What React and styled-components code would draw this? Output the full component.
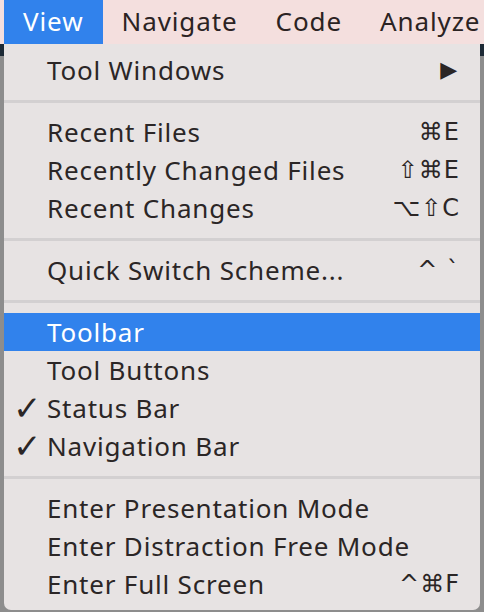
import React from "react";
import styled, { createGlobalStyle } from "styled-components";

const Global = createGlobalStyle`
  html, body { margin: 0; padding: 0; }
  body {
    background: #8d8d8d;
    font-family: "Noto Sans", "Open Sans", sans-serif;
    -webkit-font-smoothing: antialiased;
  }
`;

const Screen = styled.div`
  width: 484px;
  height: 612px;
  overflow: hidden;
  display: flex;
  flex-direction: column;
  background: linear-gradient(to bottom, #1d2a36 0px, #1d2a36 56px, #8d8d8d 56px);
`;

const MenuBar = styled.div`
  height: 44px;
  display: flex;
  align-items: stretch;
  padding-left: 4px;
  background: #f4dfde;
  flex: none;
`;

const MenuTitle = styled.div`
  display: flex;
  align-items: center;
  padding: 0 19px 2px;
  font-size: 26px;
  letter-spacing: 0.9px;
  color: ${(p) => (p.$active ? "#ffffff" : "#2b2323")};
  background: ${(p) => (p.$active ? "#3182ec" : "transparent")};
  white-space: nowrap;
`;

const Dropdown = styled.div`
  margin: 0 4px;
  padding: 7px 0 7px;
  background: #e7e3e3;
  border-radius: 0 0 7px 7px;
  display: flex;
  flex-direction: column;
`;

const Item = styled.div`
  height: 38px;
  display: grid;
  grid-template-columns: 43px 1fr auto;
  align-items: center;
  padding-right: 20px;
  padding-bottom: 1px;
  box-sizing: border-box;
  font-size: 26px;
  letter-spacing: 0.8px;
  color: ${(p) => (p.$selected ? "#ffffff" : "#2b2626")};
  background: ${(p) => (p.$selected ? "#3182ec" : "transparent")};
  white-space: nowrap;
`;

const Check = styled.span`
  font-family: "DejaVu Sans", sans-serif;
  font-size: 34px;
  padding-left: 9px;
  line-height: 1;
  font-weight: bold;
`;

const Label = styled.span`
  line-height: 1;
`;

const Shortcut = styled.span`
  font-family: "DejaVu Sans", "Liberation Sans", sans-serif;
  font-size: 24px;
  letter-spacing: 1px;
  text-align: right;
  line-height: 1;
`;

const Arrow = styled.span`
  font-family: "DejaVu Sans", sans-serif;
  font-size: 22px;
  padding-right: 2px;
`;

const Separator = styled.div`
  height: 24px;
  display: flex;
  align-items: center;
  &::after {
    content: "";
    display: block;
    width: 100%;
    height: 3px;
    background: #d3d0d1;
  }
`;

const groups = [
  [{ label: "Tool Windows", submenu: true }],
  [
    { label: "Recent Files", shortcut: "⌘E" },
    { label: "Recently Changed Files", shortcut: "⇧⌘E" },
    { label: "Recent Changes", shortcut: "⌥⇧C" },
  ],
  [{ label: "Quick Switch Scheme...", shortcut: "^ `" }],
  [
    { label: "Toolbar", selected: true },
    { label: "Tool Buttons" },
    { label: "Status Bar", checked: true },
    { label: "Navigation Bar", checked: true },
  ],
  [
    { label: "Enter Presentation Mode" },
    { label: "Enter Distraction Free Mode" },
    { label: "Enter Full Screen", shortcut: "^⌘F" },
  ],
];

export default function App() {
  return (
    <Screen>
      <Global />
      <MenuBar>
        <MenuTitle $active>View</MenuTitle>
        <MenuTitle>Navigate</MenuTitle>
        <MenuTitle>Code</MenuTitle>
        <MenuTitle>Analyze</MenuTitle>
      </MenuBar>
      <Dropdown>
        {groups.map((g, gi) => (
          <React.Fragment key={gi}>
            {gi > 0 && <Separator />}
            {g.map((it) => (
              <Item key={it.label} $selected={it.selected}>
                <Check>{it.checked ? "✓" : ""}</Check>
                <Label>{it.label}</Label>
                {it.submenu ? (
                  <Arrow>▶</Arrow>
                ) : (
                  <Shortcut>{it.shortcut || ""}</Shortcut>
                )}
              </Item>
            ))}
          </React.Fragment>
        ))}
      </Dropdown>
    </Screen>
  );
}
